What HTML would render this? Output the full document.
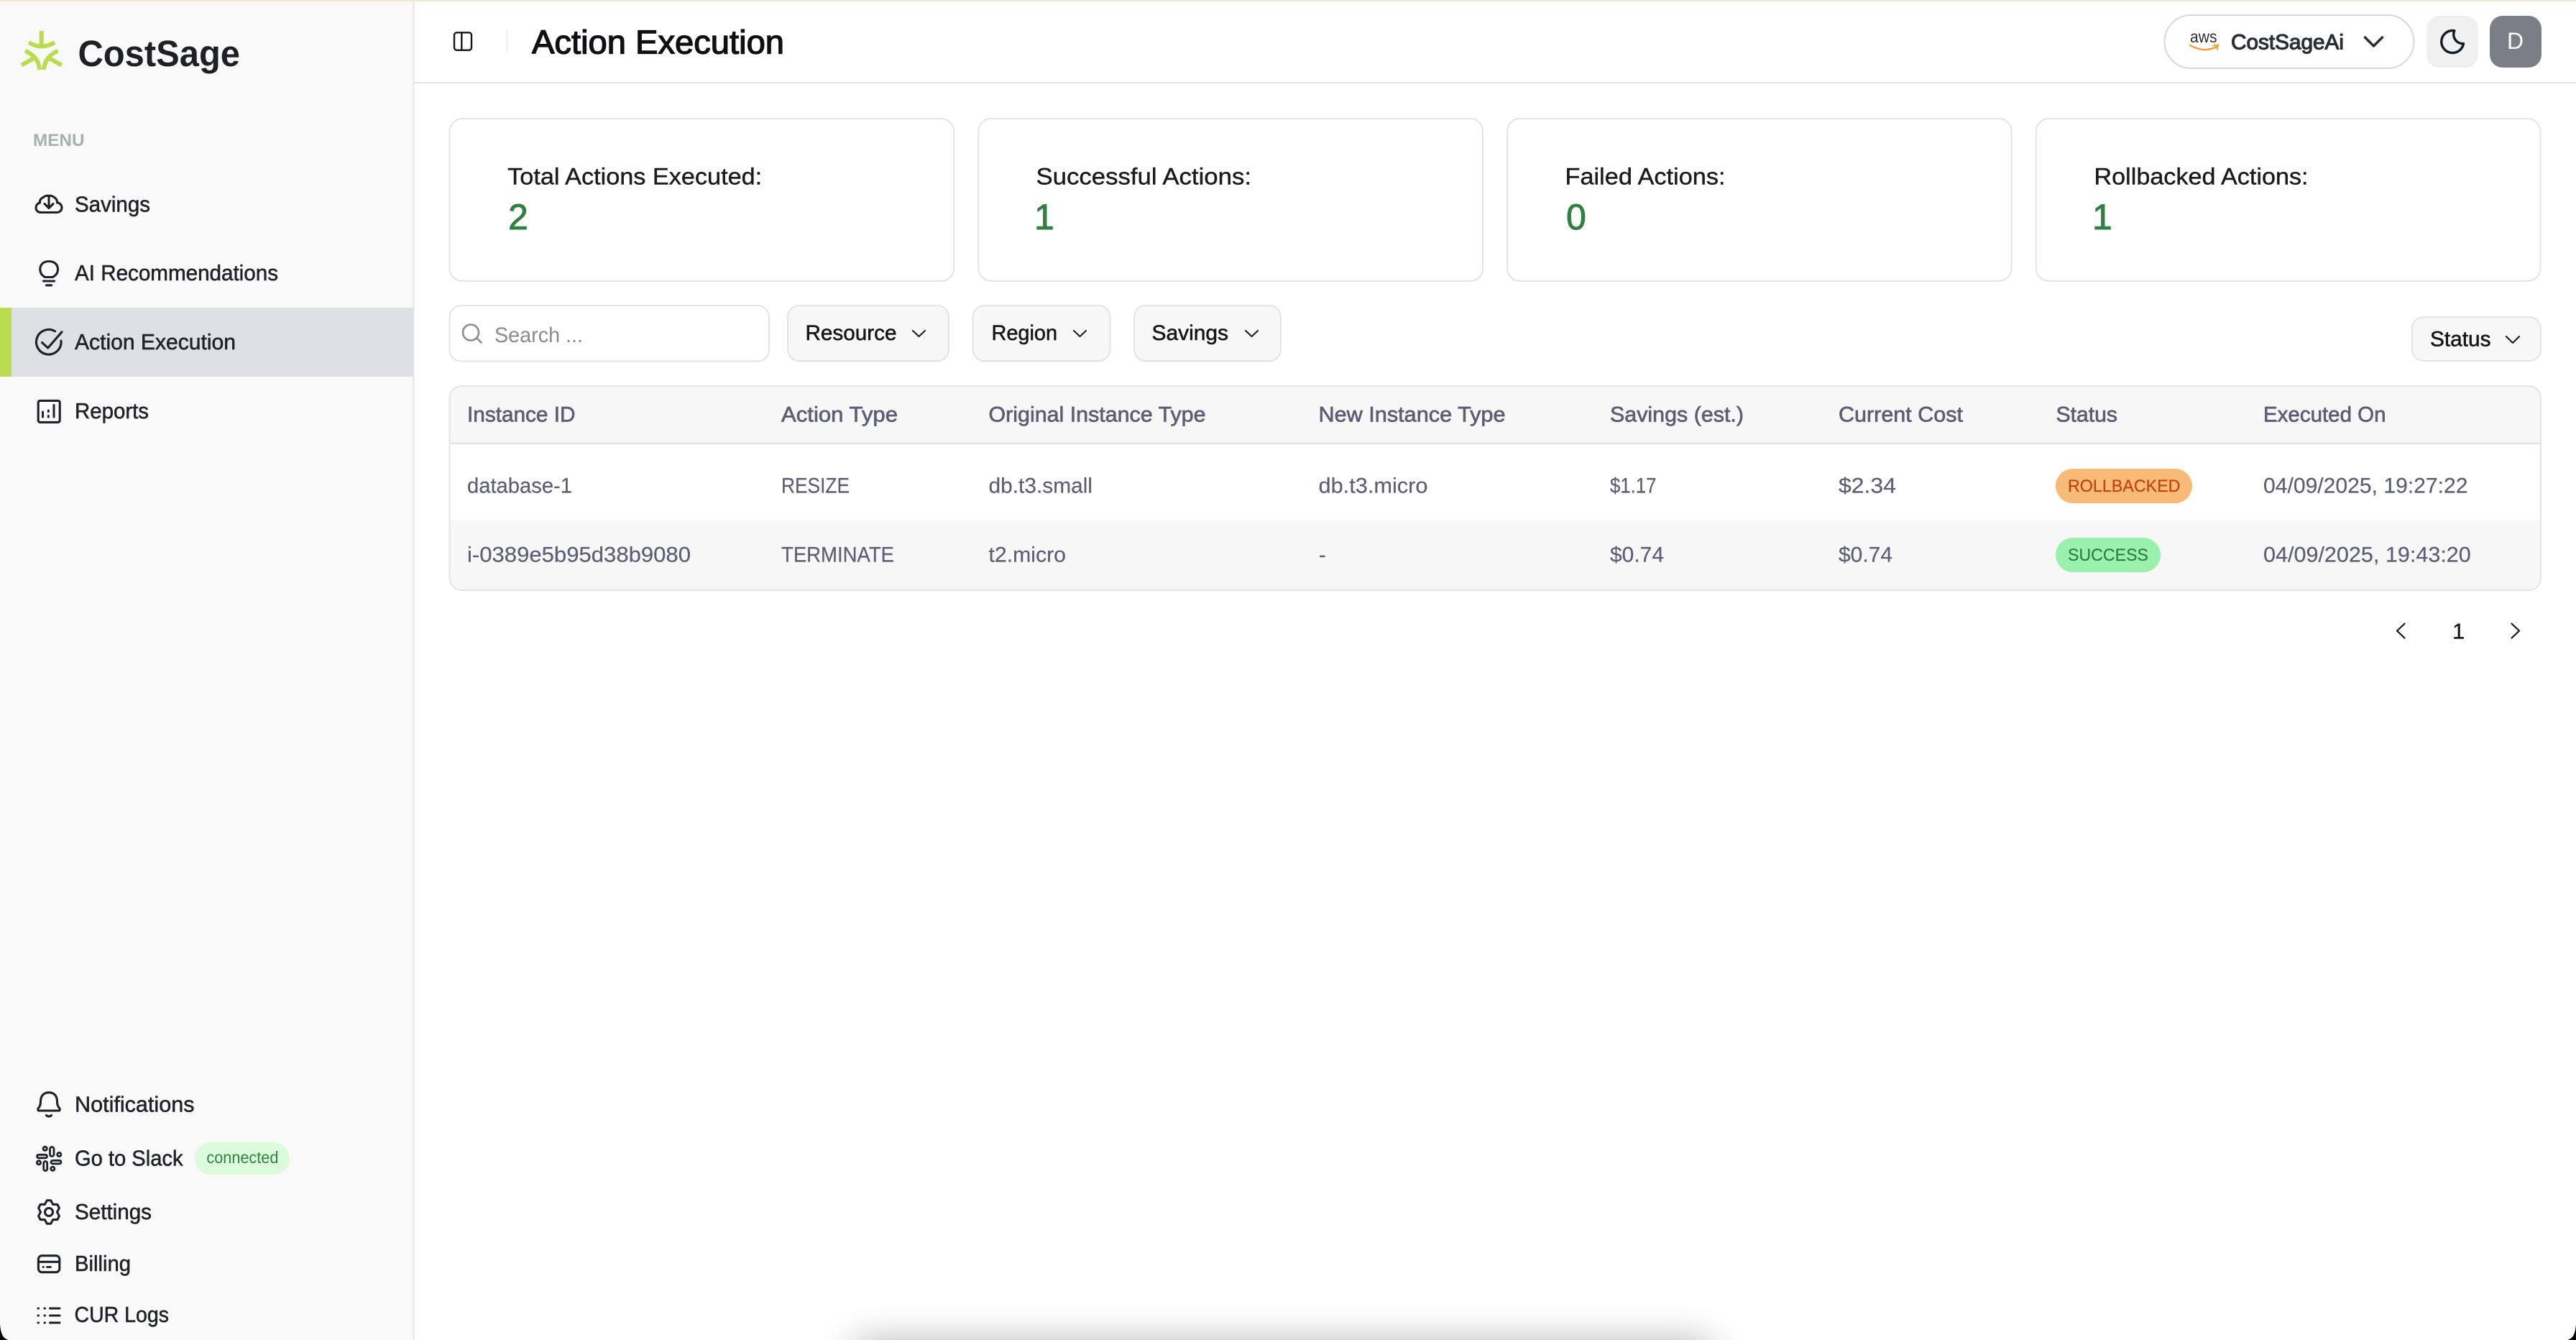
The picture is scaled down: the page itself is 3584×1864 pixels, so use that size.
<!DOCTYPE html>
<html lang="en">
<head>
<meta charset="utf-8">
<title>Action Execution - CostSage</title>
<style>
html,body{margin:0;padding:0;background:#fff;width:3584px;height:1864px;overflow:hidden}
svg{display:block}
text{font-family:"Liberation Sans",sans-serif;white-space:pre}
.nav{font-size:30.5px;fill:#1f2229;stroke:#1f2229;stroke-width:.55px}
.th{font-size:29.5px;fill:#5d5d75;stroke:#5d5d75;stroke-width:.7px}
.td{font-size:29.5px;fill:#5d5d75;stroke:#5d5d75;stroke-width:.2px}
.lbl{font-size:32px;fill:#1a1a1f;stroke:#1a1a1f;stroke-width:.4px}
.num{font-size:50px;fill:#30803f;stroke:#30803f;stroke-width:.9px}
.btn{font-size:29.5px;fill:#15151a;stroke:#15151a;stroke-width:.55px}
.ic{fill:none;stroke:#1e2128;stroke-width:3.1;stroke-linecap:round;stroke-linejoin:round}
.box{fill:#fff;stroke:#e3e3e8;stroke-width:2}
.fb{fill:#f7f7f8;stroke:#e3e3e8;stroke-width:2}
.ch{fill:none;stroke:#222;stroke-width:2.2;stroke-linecap:round;stroke-linejoin:round}
</style>
</head>
<body>
<svg xmlns="http://www.w3.org/2000/svg" width="3584" height="1864" viewBox="0 0 3584 1864">
<defs>
<filter id="sh" x="-20%" y="-300%" width="140%" height="700%"><feGaussianBlur stdDeviation="27"/></filter>
<clipPath id="tc"><rect x="625" y="536" width="2911" height="286" rx="18"/></clipPath>
</defs>
<rect width="3584" height="1864" fill="#fff"/>

<!-- bottom shadow -->
<rect x="1190" y="1868" width="1190" height="70" fill="#000" opacity=".32" filter="url(#sh)"/>

<!-- sidebar -->
<rect x="0" y="0" width="574.500" height="1864" fill="#f9f9f9"/>
<rect x="574.500" y="0" width="2" height="1864" fill="#e5e5e8"/>
<rect x="0" y="428" width="574.500" height="96" fill="#dfe0e4"/>
<rect x="0" y="428" width="16" height="96" fill="#b9dd4f"/>

<!-- logo -->
<g fill="none" stroke="#b9dd4f" stroke-width="6" stroke-linecap="butt">
<path d="M57.700 43V64"/>
<path d="M40 59Q58 70 76 59"/>
<path d="M30 90.700L46 81.500"/>
<path d="M35 70.700Q54 79 55 97"/>
<path d="M85.500 90.700L69.500 81.500"/>
<path d="M80.500 70.700Q62 79 61 97"/>
</g>
<text x="108.500" y="92" font-size="51" font-weight="700" fill="#1e2026" textLength="225.500" lengthAdjust="spacingAndGlyphs">CostSage</text>

<text x="46" y="203" font-size="24.500" font-weight="700" fill="#a3b3ab" textLength="71.500" lengthAdjust="spacingAndGlyphs">MENU</text>

<!-- nav top -->
<g class="ic">
<path d="M61 274C56.500 276 55 279 55.500 282C51.500 283 50 286.500 50 289C50 293 53 295.500 57 295.500H79C83 295.500 86 292.500 86 289C86 285 83 282 79.500 282C80 279 78 275.500 74.500 274"/>
<path d="M61 274C63 271.500 72.500 271.500 74.500 274"/>
<path d="M68 272.500V289M62 283.500L68 289.500L74 283.500"/>
</g>
<text class="nav" x="104" y="294.500" textLength="105" lengthAdjust="spacingAndGlyphs">Savings</text>

<g class="ic">
<path d="M62.500 385.500C58 383 55.800 379 55.800 374.500C55.800 367.500 61 363.500 68 363.500C75 363.500 80.500 367.500 80.500 374.500C80.500 379 78 383 73.500 385.500Z"/>
<path d="M60.500 391H75.500"/>
<path d="M64.500 396.800H71.500"/>
</g>
<text class="nav" x="104" y="390" textLength="283" lengthAdjust="spacingAndGlyphs">AI Recommendations</text>

<g class="ic">
<path d="M85 474A17.300 17.300 0 1 1 76.500 460.800"/>
<path d="M58.500 476.500L66.700 484L86 461.800"/>
</g>
<text class="nav" x="104" y="486" textLength="224" lengthAdjust="spacingAndGlyphs">Action Execution</text>

<g class="ic">
<rect x="53.200" y="557.400" width="30" height="30" rx="2.500"/>
<path d="M59.500 573V580M67.300 571V572.500M67.300 578.500V580M75 563.500V580" stroke-width="3"/>
</g>
<text class="nav" x="104" y="582" textLength="103" lengthAdjust="spacingAndGlyphs">Reports</text>

<!-- nav bottom -->
<g class="ic">
<path d="M68 1519.700C60 1519.700 56.500 1525.500 56.500 1532C56.500 1537 55.500 1539 53 1542C52.500 1544 53 1545 54.500 1545H81.500C83 1545 83.500 1544 83 1542C80.500 1539 79.500 1537 79.500 1532C79.500 1525.500 76 1519.700 68 1519.700Z"/>
<path d="M64.500 1551.500Q68 1554.500 71.500 1551.500"/>
</g>
<text class="nav" x="104" y="1546.700" textLength="166.500" lengthAdjust="spacingAndGlyphs">Notifications</text>

<g class="ic">
<rect x="69.500" y="1595.500" width="5.500" height="13" rx="2.750" stroke-width="2.800"/>
<circle cx="62.700" cy="1597.800" r="2.600" stroke-width="2.800"/>
<rect x="51.500" y="1606.300" width="14" height="4.500" rx="2.250" stroke-width="2.800"/>
<circle cx="82.300" cy="1606" r="2.600" stroke-width="2.800"/>
<rect x="71" y="1614.300" width="14" height="4.500" rx="2.250" stroke-width="2.800"/>
<circle cx="54" cy="1617.300" r="2.600" stroke-width="2.800"/>
<rect x="60.700" y="1615.500" width="5" height="13" rx="2.500" stroke-width="2.800"/>
<circle cx="73.300" cy="1625.700" r="2.600" stroke-width="2.800"/>
</g>
<text class="nav" x="104" y="1621.700" textLength="150.500" lengthAdjust="spacingAndGlyphs">Go to Slack</text>
<rect x="271" y="1589" width="132" height="45" rx="22.500" fill="#dcfbdc"/>
<text x="287.400" y="1618" font-size="23px" fill="#2e8540" textLength="100" lengthAdjust="spacingAndGlyphs">connected</text>

<g class="ic">
<path transform="translate(68 1686) scale(.88 .94)" stroke-width="3.400" d="M-3.040 -17.230L3.040 -17.230L6.500 -11.260L13.400 -11.250L16.440 -5.990L13 0L16.440 5.990L13.400 11.250L6.500 11.260L3.040 17.230L-3.040 17.230L-6.500 11.260L-13.400 11.250L-16.440 5.990L-13 0L-16.440 -5.990L-13.400 -11.250L-6.500 -11.260Z"/>
<circle cx="68" cy="1686" r="5.500"/>
</g>
<text class="nav" x="104" y="1696" textLength="107" lengthAdjust="spacingAndGlyphs">Settings</text>

<g class="ic">
<rect x="53.400" y="1746.700" width="29.400" height="23" rx="5"/>
<path d="M53.400 1755.300H82.800"/>
<path d="M60 1762.500H60.400M65.500 1762.500H70.500" stroke-width="2.800"/>
</g>
<text class="nav" x="104" y="1768" textLength="78" lengthAdjust="spacingAndGlyphs">Billing</text>

<g class="ic">
<path d="M53 1820H53.500M62 1820H62.500M69.500 1820H83" stroke-width="3"/>
<path d="M53 1830H53.500M62 1830H62.500M69.500 1830H83" stroke-width="3"/>
<path d="M53 1840H53.500M62 1840H62.500M69.500 1840H83" stroke-width="3"/>
</g>
<text class="nav" x="103.500" y="1839" textLength="131.500" lengthAdjust="spacingAndGlyphs">CUR Logs</text>

<!-- header -->
<rect x="576" y="114" width="3008" height="2" fill="#e5e5e8"/>
<g fill="none" stroke="#15151a" stroke-width="2.400" stroke-linejoin="round">
<rect x="632" y="45.300" width="24" height="24.500" rx="3.500"/>
<path d="M642.300 45.300V69.800"/>
</g>
<rect x="704.500" y="42" width="1.500" height="32" fill="#e8e8ea"/>
<text x="740" y="74.700" font-size="46px" fill="#0f0f14" stroke="#0f0f14" stroke-width="1.300" textLength="351" lengthAdjust="spacingAndGlyphs">Action Execution</text>

<rect x="3011.500" y="21" width="347" height="74" rx="37" fill="#fff" stroke="#d5d8e0" stroke-width="2"/>
<text x="3047" y="59" font-size="23px" fill="#2a2d35" textLength="37.500" lengthAdjust="spacingAndGlyphs">aws</text>
<path d="M3047 63Q3066 74 3084 65" fill="none" stroke="#f79c2e" stroke-width="2.400" stroke-linecap="round"/>
<path d="M3079 63.500L3086 62.500L3085 69" fill="none" stroke="#f79c2e" stroke-width="1.800" stroke-linecap="round"/>
<text x="3104" y="68.300" font-size="29.500px" fill="#2a2d35" stroke="#2a2d35" stroke-width="1.100" textLength="157" lengthAdjust="spacingAndGlyphs">CostSageAi</text>
<path d="M3290.500 52L3302.500 64L3314.500 52" fill="none" stroke="#2a2d35" stroke-width="3.500" stroke-linecap="round" stroke-linejoin="round"/>

<rect x="3376" y="22" width="72" height="72" rx="18" fill="#f0f0f0"/>
<path transform="translate(3393.500 37.500) scale(1.720)" d="M12 3c.132 0 .263 0 .393 0a7.500 7.500 0 0 0 7.370 10.500a9 9 0 1 1 -7.763 -10.500z" fill="none" stroke="#161b26" stroke-width="2" stroke-linejoin="round"/>
<rect x="3464" y="22" width="72" height="72" rx="18" fill="#7b7e87"/>
<text x="3488" y="68" font-size="32px" fill="#fff">D</text>

<!-- cards -->
<rect class="box" x="625.500" y="165" width="701.750" height="226" rx="18"/>
<rect class="box" x="1361.250" y="165" width="701.750" height="226" rx="18"/>
<rect class="box" x="2097" y="165" width="701.750" height="226" rx="18"/>
<rect class="box" x="2832.750" y="165" width="701.750" height="226" rx="18"/>
<text class="lbl" x="706.200" y="256.300" textLength="354" lengthAdjust="spacingAndGlyphs">Total Actions Executed:</text>
<text class="lbl" x="1441.500" y="256.300" textLength="299.500" lengthAdjust="spacingAndGlyphs">Successful Actions:</text>
<text class="lbl" x="2177.500" y="256.300" textLength="223" lengthAdjust="spacingAndGlyphs">Failed Actions:</text>
<text class="lbl" x="2913.500" y="256.300" textLength="298" lengthAdjust="spacingAndGlyphs">Rollbacked Actions:</text>
<text class="num" x="707" y="319">2</text>
<text class="num" x="1439" y="319">1</text>
<text class="num" x="2179" y="319">0</text>
<text class="num" x="2911" y="319">1</text>

<!-- filters -->
<rect class="box" x="625.500" y="425" width="444.500" height="77.500" rx="16"/>
<g fill="none" stroke="#8a8a96" stroke-width="2.600" stroke-linecap="round">
<circle cx="655" cy="462.500" r="11"/>
<path d="M663.500 470.500L669.500 476.500"/>
</g>
<text x="688" y="476" font-size="29.500px" fill="#8a8a96" textLength="123" lengthAdjust="spacingAndGlyphs">Search ...</text>

<rect x="1096" y="427" width="224" height="77" rx="16" fill="#000" opacity=".05"/>
<rect class="fb" x="1096" y="425" width="224" height="77" rx="16"/>
<text class="btn" x="1120.500" y="473" textLength="127" lengthAdjust="spacingAndGlyphs">Resource</text>
<path class="ch" d="M1270 460L1278.500 468L1287 460"/>

<rect x="1353.500" y="427" width="191" height="77" rx="16" fill="#000" opacity=".05"/>
<rect class="fb" x="1353.500" y="425" width="191" height="77" rx="16"/>
<text class="btn" x="1379.500" y="473" textLength="91.500" lengthAdjust="spacingAndGlyphs">Region</text>
<path class="ch" d="M1494 460L1502.500 468L1511 460"/>

<rect x="1578" y="427" width="204" height="77" rx="16" fill="#000" opacity=".05"/>
<rect class="fb" x="1578" y="425" width="204" height="77" rx="16"/>
<text class="btn" x="1602.500" y="473" textLength="106.500" lengthAdjust="spacingAndGlyphs">Savings</text>
<path class="ch" d="M1733 460L1741.500 468L1750 460"/>

<rect class="fb" x="3356" y="441" width="179" height="61" rx="16"/>
<text class="btn" x="3381" y="481.700" textLength="84.500" lengthAdjust="spacingAndGlyphs">Status</text>
<path class="ch" d="M3487 468L3496 477L3505 468"/>

<!-- table -->
<g clip-path="url(#tc)">
<rect x="625" y="536" width="2911" height="80" fill="#f7f7f8"/>
<rect x="625" y="618" width="2911" height="106" fill="#fff"/>
<rect x="625" y="724" width="2911" height="98" fill="#f7f7f8"/>
<rect x="625" y="615.500" width="2911" height="2.500" fill="#e3e3e8"/>
</g>
<rect x="625.500" y="537" width="2909.500" height="284" rx="17" fill="none" stroke="#e3e3e8" stroke-width="2"/>

<text class="th" x="650" y="586.700" textLength="150.500" lengthAdjust="spacingAndGlyphs">Instance ID</text>
<text class="th" x="1087" y="586.700" textLength="162" lengthAdjust="spacingAndGlyphs">Action Type</text>
<text class="th" x="1375.500" y="586.700" textLength="302" lengthAdjust="spacingAndGlyphs">Original Instance Type</text>
<text class="th" x="1834.500" y="586.700" textLength="260" lengthAdjust="spacingAndGlyphs">New Instance Type</text>
<text class="th" x="2240" y="586.700" textLength="186" lengthAdjust="spacingAndGlyphs">Savings (est.)</text>
<text class="th" x="2558" y="586.700" textLength="173" lengthAdjust="spacingAndGlyphs">Current Cost</text>
<text class="th" x="2860.500" y="586.700" textLength="85.500" lengthAdjust="spacingAndGlyphs">Status</text>
<text class="th" x="3149" y="586.700" textLength="170.500" lengthAdjust="spacingAndGlyphs">Executed On</text>

<text class="td" x="650" y="685.700" textLength="146" lengthAdjust="spacingAndGlyphs">database-1</text>
<text class="td" x="1087" y="685.700" textLength="95" lengthAdjust="spacingAndGlyphs">RESIZE</text>
<text class="td" x="1375.500" y="685.700" textLength="144.500" lengthAdjust="spacingAndGlyphs">db.t3.small</text>
<text class="td" x="1834.500" y="685.700" textLength="152" lengthAdjust="spacingAndGlyphs">db.t3.micro</text>
<text class="td" x="2240" y="685.700" textLength="64.500" lengthAdjust="spacingAndGlyphs">$1.17</text>
<text class="td" x="2558" y="685.700" textLength="80" lengthAdjust="spacingAndGlyphs">$2.34</text>
<rect x="2860" y="652" width="190" height="48" rx="24" fill="#f7ba77"/>
<text x="2877" y="684" font-size="24.500px" fill="#c2410c" stroke="#c2410c" stroke-width=".2" textLength="156.500" lengthAdjust="spacingAndGlyphs">ROLLBACKED</text>
<text class="td" x="3149" y="685.700" textLength="284.500" lengthAdjust="spacingAndGlyphs">04/09/2025, 19:27:22</text>

<text class="td" x="650" y="781.700" textLength="311" lengthAdjust="spacingAndGlyphs">i-0389e5b95d38b9080</text>
<text class="td" x="1087" y="781.700" textLength="157" lengthAdjust="spacingAndGlyphs">TERMINATE</text>
<text class="td" x="1375.500" y="781.700" textLength="107.500" lengthAdjust="spacingAndGlyphs">t2.micro</text>
<text class="td" x="1835" y="781.700">-</text>
<text class="td" x="2240" y="781.700" textLength="75" lengthAdjust="spacingAndGlyphs">$0.74</text>
<text class="td" x="2558" y="781.700" textLength="75" lengthAdjust="spacingAndGlyphs">$0.74</text>
<rect x="2860" y="748" width="146" height="48" rx="24" fill="#9af0ad"/>
<text x="2877" y="780" font-size="24.500px" fill="#2e7d46" stroke="#2e7d46" stroke-width=".2" textLength="112" lengthAdjust="spacingAndGlyphs">SUCCESS</text>
<text class="td" x="3149" y="781.700" textLength="288.800" lengthAdjust="spacingAndGlyphs">04/09/2025, 19:43:20</text>

<!-- pagination -->
<path d="M3345.500 867.500L3335 877.500L3345.500 887.500" fill="none" stroke="#15151a" stroke-width="2.200" stroke-linecap="round" stroke-linejoin="round"/>
<text x="3412" y="888.300" font-size="31px" fill="#15151a" stroke="#15151a" stroke-width=".3">1</text>
<path d="M3494.500 867.500L3505 877.500L3494.500 887.500" fill="none" stroke="#15151a" stroke-width="2.200" stroke-linecap="round" stroke-linejoin="round"/>

<!-- top stripe -->
<rect x="0" y="0" width="3584" height="2" fill="#f0e6d8"/>

<!-- window corners -->
<path d="M0 1842C1 1855 4 1862 12 1864H0Z" fill="#000"/>
<path d="M3584 1842C3583 1855 3580 1862 3572 1864H3584Z" fill="#000"/>
</svg>
</body>
</html>
